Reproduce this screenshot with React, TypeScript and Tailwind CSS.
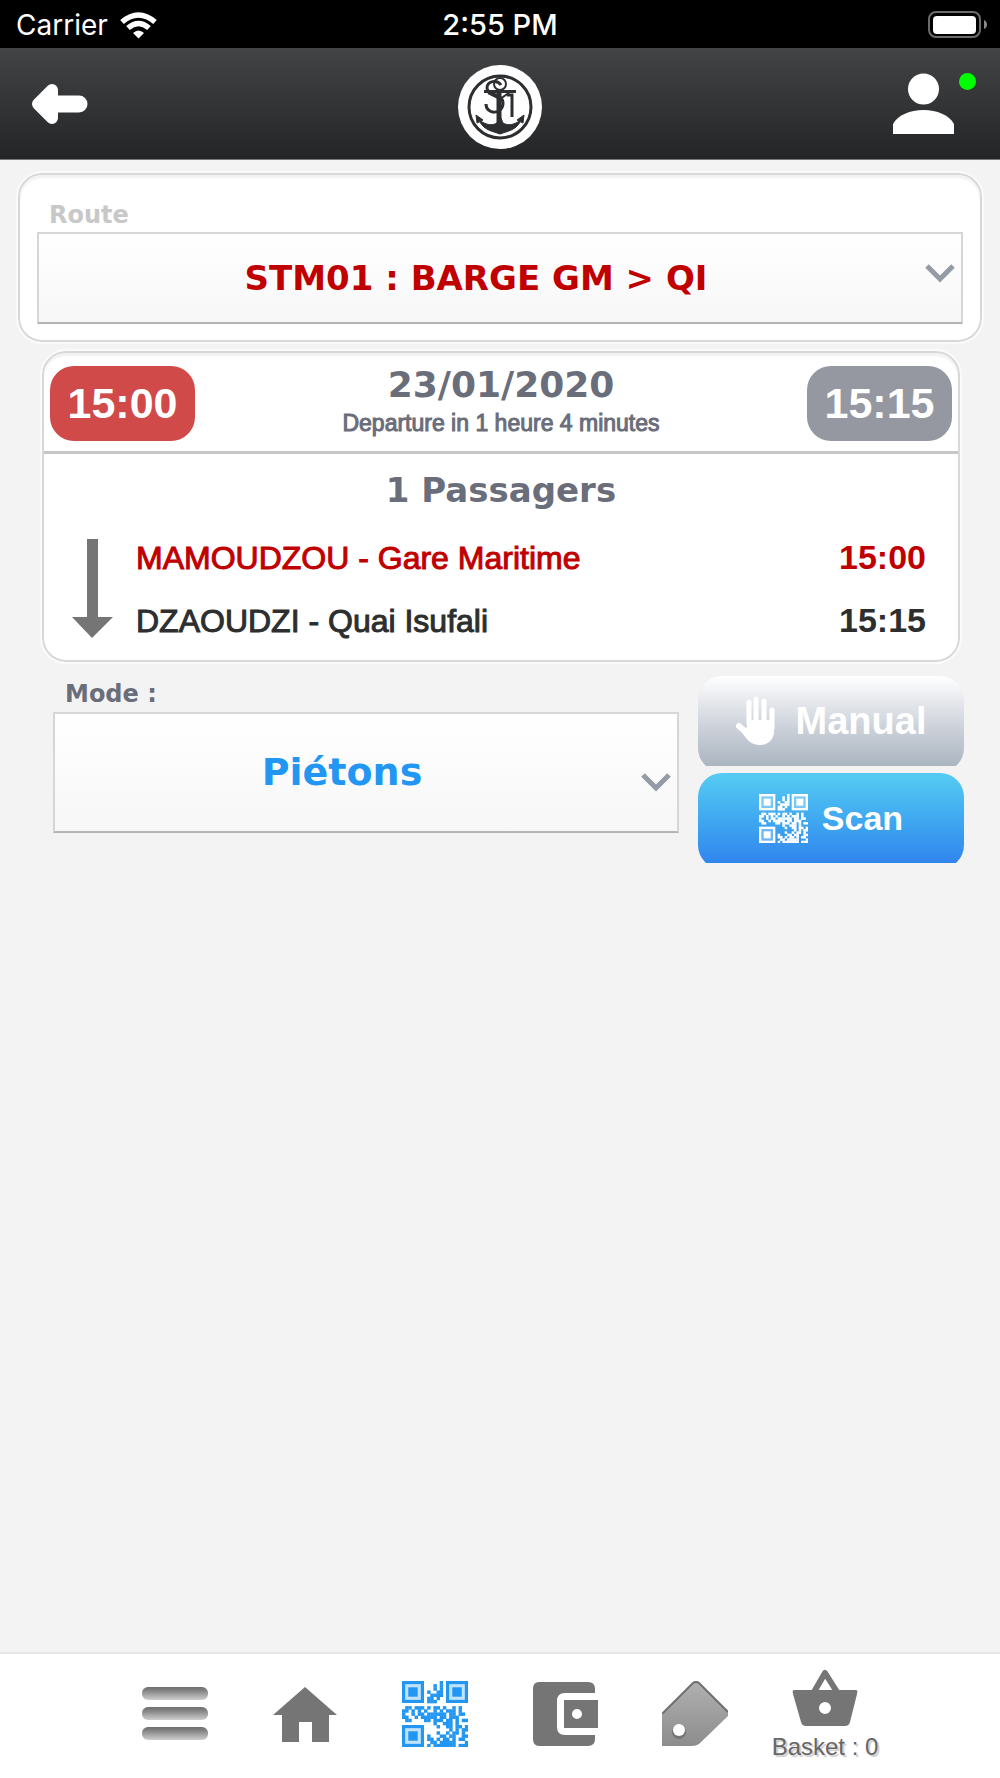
import type { ReactNode } from 'react';

const HELVETICA = "font-['Liberation_Sans',Arial,sans-serif]";
const VERDANA = "font-['DejaVu_Sans',Verdana,sans-serif]";

const QR_ROWS = [
  '............#........',
  '..........#.#........',
  '..........#.#........',
  '........#..##........',
  '.........####........',
  '........##.#.........',
  '........###..........',
  '.....................',
  '.##.###.#.##.#..#.#..',
  '##.#.#.#..#.#.###.#..',
  '#..#.##.######.##.##.',
  '##..#.#####.##.###...',
  '.##....##.###.##.#.##',
  '..........#..###.#...',
  '...........#..##.##.#',
  '...............#.#.##',
  '...........#..#.##.#.',
  '........#...##.##..##',
  '........##.#.##.#.##.',
  '.........##.#####...#',
  '........#.#######.###',
];

const FINDERS = [[0, 0], [14, 0], [0, 14]];

function QrIcon({ className }: { className?: string }) {
  return (
    <svg viewBox="0 0 21 21" className={className} fill="currentColor" aria-hidden="true">
      {QR_ROWS.map((row, y) =>
        row.split('').map((cell, x) =>
          cell === '#' ? <rect key={`${x}-${y}`} x={x} y={y} width="1.1" height="1.1" /> : null
        )
      )}
      {FINDERS.map(([x, y]) => (
        <g key={`${x}-${y}`}>
          <rect x={x + 0.5} y={y + 0.5} width="6" height="6" fillOpacity="0.28" stroke="currentColor" />
          <rect x={x + 2} y={y + 2} width="3" height="3" />
        </g>
      ))}
    </svg>
  );
}

function Chevron({ className }: { className?: string }) {
  return (
    <svg viewBox="0 0 30 20" className={`pointer-events-none absolute w-[30px] h-5 ${className}`} aria-hidden="true">
      <path d="M2 3l13 13L28 3" fill="none" stroke="#949ba5" strokeWidth="5" />
    </svg>
  );
}

function StatusBar() {
  return (
    <div className="grid grid-cols-3 items-center h-12 pt-[2px] bg-black text-white text-[28px] leading-8 font-['Inter',sans-serif] px-4">
      <div className="flex items-center gap-3">
        <span>Carrier</span>
        <svg viewBox="0 0 37 28" className="w-[37px] h-7" fill="none" stroke="white" aria-hidden="true">
          <path d="M2 11Q18.500-3 35 11" strokeWidth="5.500" />
          <path d="M8 17Q18.500 8 29 17" strokeWidth="5.500" />
          <path d="M13 22Q18.500 17 24 22L18.500 27.500Z" fill="white" stroke="none" />
        </svg>
      </div>
      <span className="text-center font-medium text-[29px]">2:55 PM</span>
      <svg viewBox="0 0 60 28" className="w-[60px] h-7 justify-self-end -mr-1" aria-hidden="true">
        <rect x="1" y="1" width="51" height="25" rx="7" fill="none" stroke="#6b6b6b" strokeWidth="2" />
        <rect x="5" y="5" width="43" height="18" rx="4" fill="white" />
        <path d="M56 9q3 1.500 3 4.500t-3 4.500z" fill="#8a8a8a" />
      </svg>
    </div>
  );
}

function Logo() {
  return (
    <svg viewBox="0 0 84 84" className="w-[84px] h-[84px]" fill="none" stroke="#2d2e30" aria-label="STM" role="img">
      <circle cx="42" cy="42" r="42" fill="white" stroke="none" />
      <circle cx="42" cy="42" r="31" strokeWidth="3" />
      <circle cx="42" cy="19" r="6" strokeWidth="2" />
      <path d="M43 20c-4-6-14-4-14 3 0 8 16 5 16 15 0 12-17 12-17 1" strokeWidth="3" />
      <path d="M26 26.500h32" strokeWidth="3" />
      <path d="M41 26v42" strokeWidth="5" />
      <path d="M30 28l12 6 10-7" strokeWidth="2" />
      <path d="M49 30h5v22" strokeWidth="3" />
      <path d="M21 55c4 10 13 11 21 14 8-3 17-4 21-14-7 5-13 6-18 3l-3-7-3 7c-5 3-11 2-18-3z" fill="#2d2e30" strokeWidth="1" />
      <path d="M18 50l7 5-6 3zM66 50l-7 5 6 3z" fill="#2d2e30" strokeWidth="1" />
    </svg>
  );
}

function Header() {
  return (
    <header className="grid grid-cols-3 items-center h-28 px-[30px] bg-linear-to-b from-[#434446] to-[#242526] border-b border-[#77787c]">
      <button type="button" aria-label="Back" className="justify-self-start">
        <svg viewBox="0 0 58 44" className="w-[58px] h-11" aria-hidden="true">
          <path d="M8 22L22 8v28z" fill="white" stroke="white" strokeWidth="12" strokeLinejoin="round" />
          <path d="M22 22h27" stroke="white" strokeWidth="17" strokeLinecap="round" />
        </svg>
      </button>
      <div className="justify-self-center pt-[6px]">
        <Logo />
      </div>
      <button type="button" aria-label="Account" className="relative justify-self-end mr-4">
        <svg viewBox="0 0 61 62" className="w-[61px] h-[62px]" fill="white" aria-hidden="true">
          <circle cx="30.500" cy="16" r="15.500" />
          <path d="M0 61V51C5 42 17 37 30.500 37S56 42 61 51v10z" />
        </svg>
        <span className="absolute top-0 -right-[22px] w-[17px] h-[17px] rounded-full bg-[#00ff00]" />
      </button>
    </header>
  );
}

const cardStyle = 'bg-white border-2 border-[#d8d8d8] outline-2 outline-[#fafafa] shadow-[inset_0_3px_2px_#f1f3f3]';
const selectStyle =
  'block w-full appearance-none border-2 border-[#d6d6d6] border-b-[#b4b4b4] bg-linear-to-b from-white to-[#f7f7f7] font-bold [text-align-last:center]';

function RouteCard() {
  return (
    <section className={`rounded-3xl px-[17px] pt-6 pb-4 ${cardStyle}`}>
      <label htmlFor="route" className={`block pl-3 text-2xl leading-8 font-bold text-[#c8c8c8] ${VERDANA}`}>
        Route
      </label>
      <div className="relative pt-px">
        <select id="route" className={`h-[92px] pl-0 pr-12 text-[34px] text-[#c00000] ${VERDANA} ${selectStyle}`}>
          <option>STM01 : BARGE GM &gt; QI</option>
        </select>
        <Chevron className="right-2 top-8" />
      </div>
    </section>
  );
}

function TimePill({ time, className }: { time: string; className: string }) {
  return (
    <span className={`flex items-center justify-center w-[145px] h-[75px] rounded-3xl text-white text-[43px] font-bold ${className}`}>
      {time}
    </span>
  );
}

const STOPS = [
  { name: 'MAMOUDZOU - Gare Maritime', time: '15:00', color: 'text-[#c00000]' },
  { name: 'DZAOUDZI - Quai Isufali', time: '15:15', color: 'text-[#2d2e2e]' },
];

function TripCard() {
  return (
    <section className={`ml-6 mr-[22px] mt-[9px] rounded-3xl ${cardStyle} ${HELVETICA}`}>
      <div className="flex items-center justify-between px-[6px] pt-3 pb-[10px] border-b-[3px] border-[#c6c6c6]">
        <TimePill time="15:00" className="bg-[#d04a4a]" />
        <div className="text-center text-[#6a6d7a]">
          <h1 className={`text-4xl leading-10 font-bold ${VERDANA}`}>23/01/2020</h1>
          <p className="text-[23px] leading-9 [-webkit-text-stroke:1px]">Departure in 1 heure 4 minutes</p>
        </div>
        <TimePill time="15:15" className="bg-[#9597a1]" />
      </div>
      <h2 className={`pt-3 text-center text-[34px] leading-12 font-bold text-[#6a6d7a] ${VERDANA}`}>1 Passagers</h2>
      <div className="flex items-center pl-7 pr-8 pt-3 pb-2">
        <svg viewBox="0 0 42 100" className="w-[42px] h-[100px] mr-[22px] shrink-0" fill="#757575" aria-hidden="true">
          <path d="M15 0h11v78h15L20 99 0 78h15z" />
        </svg>
        <ul className="flex-1">
          {STOPS.map((stop) => (
            <li key={stop.name} className={`flex items-center justify-between h-[63px] ${stop.color}`}>
              <span className="text-[32px] [-webkit-text-stroke:1px]">{stop.name}</span>
              <span className="text-[34px] font-bold">{stop.time}</span>
            </li>
          ))}
        </ul>
      </div>
    </section>
  );
}

// The lower edge of the pill is cut straight by the wrapper
function ActionButton({ className, children }: { className: string; children: ReactNode }) {
  return (
    <div className="h-[90px] overflow-hidden">
      <button
        type="button"
        className={`flex items-center justify-center w-full h-24 pb-[6px] rounded-3xl text-white font-bold ${HELVETICA} ${className}`}
      >
        {children}
      </button>
    </div>
  );
}

function ModeRow() {
  return (
    <section className="flex gap-[19px] mt-[14px] pl-[35px] pr-[18px]">
      <div className="flex-1">
        <label htmlFor="mode" className={`block pl-3 text-2xl leading-9 font-bold text-[#6a6d7a] ${VERDANA}`}>
          Mode :
        </label>
        <div className="relative">
          <select id="mode" className={`h-[121px] pr-12 text-[38px] text-[#2196f3] ${VERDANA} ${selectStyle}`}>
            <option>Piétons</option>
          </select>
          <Chevron className="right-2 top-[60px]" />
        </div>
      </div>
      <div className="w-[266px] flex flex-col gap-[7px]">
        <ActionButton className="gap-5 text-[38px] bg-linear-to-b from-white via-[#d0d4dc] to-[#a5b1bc]">
          <svg viewBox="0 0 40 50" className="w-10 h-[50px]" fill="none" stroke="white" strokeLinecap="round" aria-hidden="true">
            <path d="M13 6v22M20 3v25M28 5v23M36 14v18" strokeWidth="5" />
            <path d="M3 30l8 7" strokeWidth="6" />
            <path d="M11 24h27v11c0 9-6 14-14 14-9 0-13-5-19-14l6-4z" fill="white" stroke="none" />
          </svg>
          Manual
        </ActionButton>
        <ActionButton className="gap-[14px] text-[34px] bg-linear-to-b from-[#56ccf2] to-[#2f80ed]">
          <QrIcon className="w-[49px] h-[49px]" />
          Scan
        </ActionButton>
      </div>
    </section>
  );
}

function TabBar() {
  return (
    <nav className={`grid grid-cols-6 items-center h-[126px] px-[11%] pb-1 bg-white border-t-2 border-[#e6e6e6] text-[#757575] ${HELVETICA}`}>
      <a href="#menu" aria-label="Menu" className="justify-self-center">
        <svg viewBox="0 0 66 66" className="w-[66px] h-[66px]" aria-hidden="true">
          <defs>
            <linearGradient id="bar" x1="0" y1="0" x2="0" y2="1">
              <stop offset="0" stopColor="#6f6f6f" />
              <stop offset="0.300" stopColor="#858585" />
              <stop offset="1" stopColor="#cfcfcf" />
            </linearGradient>
          </defs>
          {[6, 26, 46].map((y) => (
            <rect key={y} x="0" y={y} width="66" height="13" rx="6" fill="url(#bar)" />
          ))}
        </svg>
      </a>
      <a href="#home" aria-label="Home" className="justify-self-center">
        <svg viewBox="0 0 66 66" className="w-[66px] h-[66px]" fill="currentColor" aria-hidden="true">
          <path d="M33 6L1 34h9v27h17V41h13v20h17V34h8z" />
        </svg>
      </a>
      <a href="#scan" aria-label="Scan" className="justify-self-center text-[#2196f3]">
        <QrIcon className="w-[66px] h-[66px]" />
      </a>
      <a href="#wallet" aria-label="Wallet" className="justify-self-center">
        <svg viewBox="0 0 66 66" className="w-[66px] h-[66px]" fill="currentColor" aria-hidden="true">
          <path d="M7 1h49q7 0 7 7v4H33q-8 0-8 8v26q0 8 8 8h30v4q0 7-7 7H7q-6 0-6-7V8q0-7 6-7z" />
          <path d="M32 19h34v28H32zM45 28a5 5 0 1 0 0 10 5 5 0 1 0 0-10z" fillRule="evenodd" />
        </svg>
      </a>
      <a href="#tickets" aria-label="Tickets" className="justify-self-center">
        <svg viewBox="0 0 66 66" className="w-[66px] h-[66px]" aria-hidden="true">
          <defs>
            <linearGradient id="tag" x1="0" y1="0" x2="0" y2="1">
              <stop offset="0" stopColor="#b0b0b0" />
              <stop offset="1" stopColor="#8c8c8c" />
            </linearGradient>
          </defs>
          <path d="M0 34L31 2q3-2 6 0l29 29v4L37 63q-3 2-7 2H0z" fill="url(#tag)" />
          <path d="M0 33L31 2q3-2 6 0l29 29" fill="none" stroke="#6e6e6e" strokeWidth="2" />
          <circle cx="17" cy="51" r="7" fill="#757575" />
          <circle cx="17" cy="49" r="6" fill="white" />
        </svg>
      </a>
      <a href="#basket" className="justify-self-center flex flex-col items-center pt-1">
        <svg viewBox="0 0 66 58" className="w-[66px] h-[58px]" fill="currentColor" aria-hidden="true">
          <path d="M22 23L33 4l12 19" fill="none" stroke="currentColor" strokeWidth="6" strokeLinejoin="round" />
          <path d="M2 21h62q2 0 1 4l-7 28q-1 4-5 4H14q-4 0-5-4L1 25q-1-4 1-4zM33 33a6 6 0 1 0 0 12 6 6 0 1 0 0-12z" fillRule="evenodd" />
        </svg>
        <span className="pt-1 text-2xl leading-8 whitespace-nowrap text-[#666] [text-shadow:2px_2px_1px_#ccc]">Basket : 0</span>
      </a>
    </nav>
  );
}

export default function App() {
  return (
    <div className="min-h-screen flex flex-col bg-[#f3f3f3]">
      <StatusBar />
      <Header />
      <main className="flex-1 px-[18px] pt-[13px]">
        <RouteCard />
        <TripCard />
        <ModeRow />
      </main>
      <TabBar />
    </div>
  );
}
